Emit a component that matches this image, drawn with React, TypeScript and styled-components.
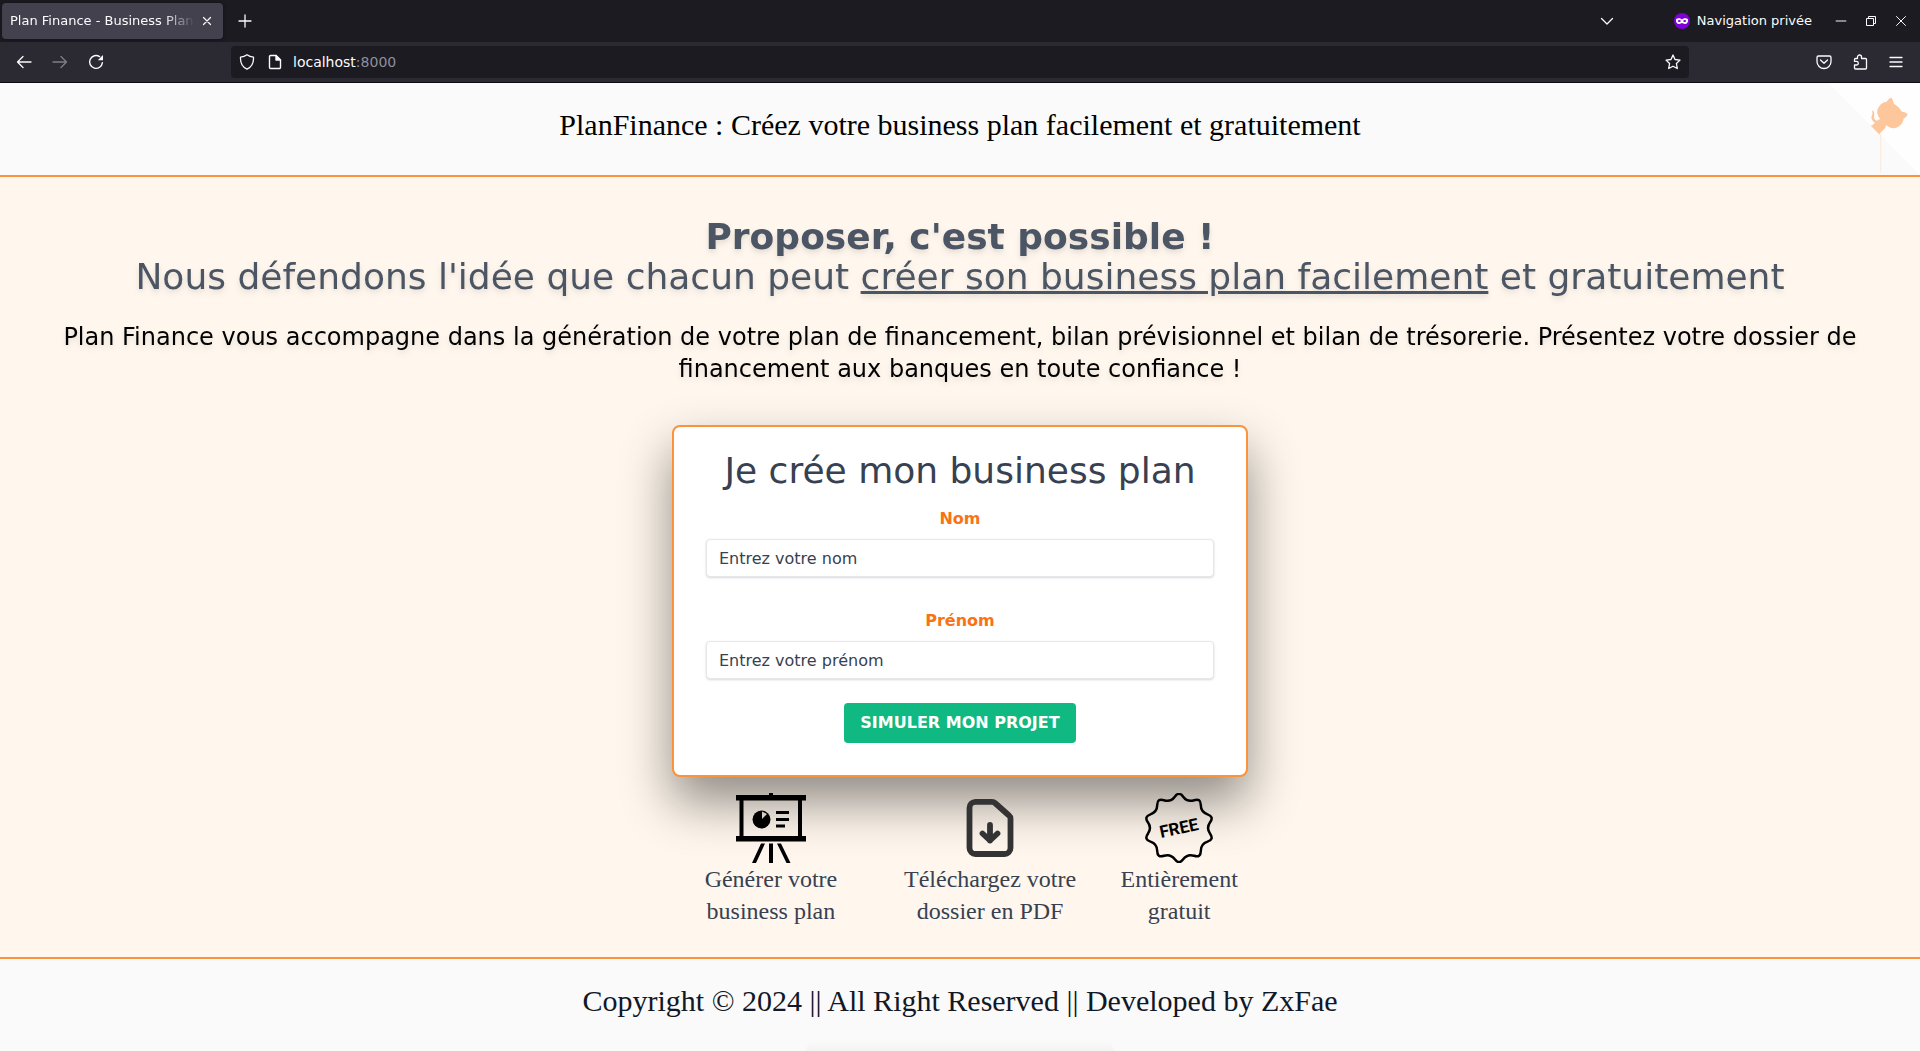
import React from "react";
import styled, { createGlobalStyle } from "styled-components";

const sans = `"DejaVu Sans", Verdana, sans-serif`;
const serif = `"Liberation Serif", "Times New Roman", serif`;

const GlobalStyle = createGlobalStyle`
  *, *::before, *::after { box-sizing: border-box; }
  body { margin: 0; background: #fafafa; font-family: ${sans}; font-size: 16px; line-height: 24px; color: #000; }
  h1, h2, p, ul { margin: 0; padding: 0; font-weight: 400; }
  button, input { font: inherit; color: inherit; }
  svg { display: block; }
`;

const Page = styled.div`
  display: flex;
  flex-direction: column;
  min-height: 100vh;
  overflow: hidden;
`;

/* ---------- Browser window ---------- */

const Chrome = styled.div`
  background: #2b2a33;
  border-bottom: 1px solid #0c0c0d;
  color: #fbfbfe;
  font-size: 13px;
  line-height: 20px;
`;

const TabBar = styled.div`
  display: flex;
  align-items: center;
  height: 42px;
  padding: 0 4px 0 2px;
  background: #1c1b22;
`;

const Tab = styled.div`
  display: flex;
  align-items: center;
  width: 221px;
  height: 36px;
  padding: 0 4px 0 8px;
  border-radius: 4px;
  background: #42414d;
  box-shadow: 0 0 4px rgba(0, 0, 0, 0.4);
`;

const TabTitle = styled.span`
  flex: 1;
  min-width: 0;
  overflow: hidden;
  white-space: nowrap;
  mask-image: linear-gradient(to left, transparent, #000 32px);
`;

const IconButton = styled.button<{ $w?: number; $dim?: boolean }>`
  display: flex;
  align-items: center;
  justify-content: center;
  flex: none;
  width: ${(p) => p.$w ?? 36}px;
  height: 32px;
  padding: 0;
  border: 0;
  background: none;
  color: #fbfbfe;
  opacity: ${(p) => (p.$dim ? 0.4 : 1)};
`;

const Spacer = styled.div`
  flex: 1;
`;

const PrivateLabel = styled.div`
  display: flex;
  align-items: center;
  gap: 7px;
  margin: 0 14px 0 49px;
`;

const NavBar = styled.div`
  display: flex;
  align-items: center;
  height: 40px;
  padding: 0 6px;
`;

const UrlBox = styled.div`
  display: flex;
  align-items: center;
  flex: 1;
  height: 32px;
  margin: 0 117px;
  padding: 0 2px;
  border-radius: 4px;
  background: #1c1b22;
`;

const Url = styled.span`
  flex: 1;
  padding-left: 4px;
  color: #8f8f9d;
  font-size: 14px;

  b {
    font-weight: 400;
    color: #fbfbfe;
  }
`;

/* ---------- Page ---------- */

const Header = styled.header`
  position: relative;
  padding: 24px 24px 32px;
  border-bottom: 2px solid #fb923c;
  background: #fafafa;
  text-align: center;
`;

const SiteTitle = styled.h1`
  font-family: ${serif};
  font-size: 30px;
  line-height: 36px;
`;

const GithubCorner = styled.a`
  position: absolute;
  top: 0;
  right: 0;
  color: #fdc79b;
`;

const Main = styled.main`
  display: flex;
  flex-direction: column;
  align-items: center;
  padding: 40px 40px 30px;
  background: #fff7ed;
  text-align: center;
`;

const Hero = styled.section`
  filter: drop-shadow(0 4px 3px rgba(0, 0, 0, 0.07)) drop-shadow(0 2px 2px rgba(0, 0, 0, 0.06));
`;

const Headline = styled.h2`
  color: #4b5563;
  font-size: 36px;
  line-height: 40px;

  strong {
    display: block;
  }
`;

const Lead = styled.p`
  margin-top: 24px;
  font-size: 24px;
  line-height: 32px;
`;

const Card = styled.form`
  display: flex;
  flex-direction: column;
  align-items: center;
  width: 100%;
  max-width: 576px;
  margin-top: 40px;
  padding: 24px 32px 32px;
  border: 2px solid #fb923c;
  border-radius: 8px;
  background: #fff;
  box-shadow: 0 25px 50px rgba(0, 0, 0, 0.44);
`;

const CardTitle = styled.h2`
  margin-bottom: 16px;
  color: #374151;
  font-size: 36px;
  line-height: 40px;
`;

const Field = styled.div<{ $last?: boolean }>`
  display: flex;
  flex-direction: column;
  align-items: center;
  gap: 8px;
  width: 100%;
  margin-bottom: ${(p) => (p.$last ? 24 : 32)}px;
`;

const Label = styled.label`
  color: #f97316;
  font-weight: 700;
`;

const TextInput = styled.input`
  width: 100%;
  height: 38px;
  padding: 8px 12px;
  border: 1px solid #e5e7eb;
  border-radius: 4px;
  background: #fff;
  box-shadow: 0 1px 3px rgba(0, 0, 0, 0.1), 0 1px 2px rgba(0, 0, 0, 0.06);
  color: #374151;
  line-height: 20px;

  &::placeholder {
    color: #374151;
    opacity: 1;
  }
`;

const Submit = styled.button`
  padding: 8px 16px;
  border: 0;
  border-radius: 4px;
  background: #10b981;
  color: #fff;
  font-weight: 700;
  text-transform: uppercase;
`;

const Features = styled.ul`
  position: relative;
  display: flex;
  justify-content: center;
  width: 100%;
  max-width: 576px;
  margin-top: 16px;
  list-style: none;
`;

const Feature = styled.li`
  display: flex;
  flex-direction: column;
  align-items: center;
  color: #374151;
  font-family: ${serif};
  font-size: 24px;
  line-height: 32px;
`;

const Footer = styled.footer`
  position: relative;
  flex: 1;
  padding: 24px 24px 32px;
  border-top: 2px solid #fb923c;
  background: #fafafa;
  color: #111827;
  font-family: ${serif};
  font-size: 30px;
  line-height: 36px;
  text-align: center;
`;

const FooterShade = styled.div`
  position: absolute;
  bottom: 0;
  left: 50%;
  width: 308px;
  height: 10px;
  margin-left: -154px;
  border-radius: 10px 10px 0 0;
  background: linear-gradient(#fafafa, #f4f3f2);
`;

/* ---------- Icons ---------- */

const Line = ({ d, size = 16, sw = 1.3 }: { d: string; size?: number; sw?: number }) => (
  <svg width={size} height={size} viewBox="0 0 16 16" fill="none" stroke="currentColor" strokeWidth={sw} strokeLinecap="round" strokeLinejoin="round" aria-hidden>
    <path d={d} />
  </svg>
);

const Reload = () => (
  <svg width="16" height="16" viewBox="0 0 16 16" fill="none" stroke="currentColor" strokeWidth="1.4" strokeLinecap="round" aria-hidden>
    <path d="M11.6 2.6A6.4 6.4 0 1 0 14.4 8.6" />
    <path d="M15 1v5.2H9.8z" fill="currentColor" stroke="none" />
  </svg>
);

const PageIcon = () => (
  <svg width="16" height="16" viewBox="0 0 16 16" fill="none" stroke="currentColor" strokeWidth="1.4" strokeLinejoin="round" aria-hidden>
    <path d="M3.7 1.5H9l4.5 4.5v7.3a1.2 1.2 0 0 1-1.2 1.2H3.7a1.2 1.2 0 0 1-1.2-1.2V2.7a1.2 1.2 0 0 1 1.2-1.2z" />
    <path d="M9 1.5V6h4.5z" fill="currentColor" />
  </svg>
);

const Mask = () => (
  <svg width="16" height="16" viewBox="0 0 16 16" aria-hidden>
    <circle cx="8" cy="8" r="8" fill="#8000d7" />
    <path d="M2 6.2c1.6-1.6 4.4-1 6 .3 1.6-1.3 4.4-1.9 6-.3.4 3-1 4.8-3 4.8-1.5 0-2.2-1-3-1s-1.500 1-3 1c-2 0-3.400-1.800-3-4.800z" fill="#fff" />
    <ellipse cx="5.3" cy="8" rx="1.5" ry="1" fill="#8000d7" />
    <ellipse cx="10.7" cy="8" rx="1.5" ry="1" fill="#8000d7" />
  </svg>
);

const Restore = () => (
  <svg width="12" height="12" viewBox="0 0 12 12" fill="none" stroke="currentColor" aria-hidden>
    <path d="M1.5 3.5h7v7h-7zM3.5 3.5v-2h7v7h-2" />
  </svg>
);

const Octocat = () => (
  <svg width="92" height="92" viewBox="0 0 250 250" aria-hidden>
    <path d="M0,0 L115,115 L130,115 L142,142 L250,250 L250,0 Z" fill="#fefefe" />
    <path d="M143 138V243" stroke="currentColor" strokeWidth="3" opacity="0.3" />
    <path d="M128.3,109.0 C113.8,99.7 119.0,89.6 119.0,89.6 C122.0,82.7 120.5,78.6 120.5,78.6 C119.2,72.0 123.4,76.3 123.4,76.3 C127.3,80.9 125.5,87.3 125.5,87.3 C122.9,97.6 130.6,101.9 134.4,103.2" fill="currentColor" />
    <path d="M115.0,115.0 C114.9,115.1 118.7,116.5 119.8,115.4 L133.7,101.6 C136.9,99.2 139.9,98.4 142.2,98.6 C133.8,88.0 127.5,74.4 143.8,58.0 C148.5,53.4 154.0,51.2 159.7,51.0 C160.3,49.4 163.2,43.6 171.4,40.1 C171.4,40.1 176.1,42.5 178.8,56.2 C183.1,58.6 187.2,61.8 190.9,65.4 C194.5,69.0 197.7,73.2 200.1,77.6 C213.8,80.2 216.3,84.9 216.3,84.9 C212.7,93.1 206.9,96.0 205.4,96.6 C205.1,102.4 203.0,107.8 198.3,112.5 C181.9,128.9 168.3,122.5 157.7,114.1 C157.9,116.9 156.7,120.9 152.7,124.9 L141.0,136.5 C139.8,137.7 141.6,141.9 141.8,141.8 Z" fill="currentColor" />
  </svg>
);

const Presentation = () => (
  <svg width="70" height="70" viewBox="0 0 70 70" aria-hidden>
    <path d="M33 0h4v2h33v5.500h-4V43h4v5.500H0V43h3.500V7.500H0V2h33zM7.500 7.500V43h54.500V7.500z" fillRule="evenodd" />
    <circle cx="25.500" cy="26.500" r="9" />
    <path d="M26 26V18.500l5 2.500z" fill="#d5ccc3" />
    <path d="M40 18h13v3H40zM40 25h13v3H40zM40 31.500h9v3h-9z" />
    <path d="M33 50.500h4V70h-4zM25 50.500h4L20 70h-4zM41 50.500h4L54.500 70h-4z" />
  </svg>
);

const Download = () => (
  <svg width="70" height="70" viewBox="0 0 70 70" fill="none" stroke="#333" strokeWidth="5.8" strokeLinecap="round" strokeLinejoin="round" aria-hidden>
    <path d="M20.5 8.8H37a4 4 0 0 1 3 1.2L54 22.5a4 4 0 0 1 1.5 3V55a6 6 0 0 1-6 6h-29a6 6 0 0 1-6-6V14.8a6 6 0 0 1 6-6z" />
    <path d="M35 32v15.500M27.500 40.500l7.500 7 7.500-7" />
  </svg>
);

/* Ten-pointed seal outline; each tip and valley is the control point of a curve. */
const sealPath = (() => {
  const n = 10;
  const pt = (i: number) => {
    const r = i % 2 === 0 ? 37 : 27;
    const a = (Math.PI * i) / n - Math.PI / 2;
    return [35 + r * Math.cos(a), 35 + r * Math.sin(a)];
  };
  const mid = (i: number) => {
    const [x, y] = pt(i);
    const [nx, ny] = pt(i + 1);
    return `${(x + nx) / 2} ${(y + ny) / 2}`;
  };
  let d = `M${mid(0)}`;
  for (let i = 1; i <= 2 * n; i++) {
    const [x, y] = pt(i);
    d += `Q${x} ${y} ${mid(i)}`;
  }
  return `${d}Z`;
})();

const FreeSeal = () => (
  <svg width="70" height="70" viewBox="0 0 70 70" aria-hidden>
    <path d={sealPath} fill="none" stroke="#000" strokeWidth="2.5" strokeLinejoin="round" />
    <text x="35" y="41" textAnchor="middle" fontFamily="Roboto, Arial, sans-serif" fontSize="17" fontWeight="700" transform="rotate(-12 35 35)">FREE</text>
  </svg>
);

export default function App() {
  return (
    <Page>
      <GlobalStyle />
      <Chrome>
        <TabBar>
          <Tab>
            <TabTitle>Plan Finance - Business Plan</TabTitle>
            <IconButton $w={24} aria-label="Fermer l'onglet"><Line sw={1.2} d="M4.500 4.500l7 7M11.500 4.500l-7 7" /></IconButton>
          </Tab>
          <IconButton $w={44} aria-label="Nouvel onglet"><Line d="M8 2v12M2 8h12" /></IconButton>
          <Spacer />
          <IconButton aria-label="Onglets"><Line d="M2.500 5.500L8 11l5.500-5.500" /></IconButton>
          <PrivateLabel><Mask />Navigation privée</PrivateLabel>
          <IconButton $w={30} aria-label="Réduire"><Line size={12} d="M1.500 8h13" /></IconButton>
          <IconButton $w={30} aria-label="Restaurer"><Restore /></IconButton>
          <IconButton $w={30} aria-label="Fermer"><Line size={12} d="M2 2l12 12M14 2L2 14" /></IconButton>
        </TabBar>
        <NavBar>
          <IconButton aria-label="Précédent"><Line d="M15 8H1.500M7 2.500L1.500 8 7 13.500" /></IconButton>
          <IconButton $dim aria-label="Suivant"><Line d="M1 8h13.500M9 2.500L14.500 8 9 13.500" /></IconButton>
          <IconButton aria-label="Actualiser"><Reload /></IconButton>
          <UrlBox>
            <IconButton $w={28} aria-label="Protection"><Line d="M8 .8c2 1.500 4.300 2.200 6.500 2.400.3 5.400-1.600 9.800-6.500 12-4.900-2.200-6.800-6.600-6.500-12C3.700 3 6 2.300 8 .8z" /></IconButton>
            <IconButton $w={28} aria-label="Informations"><PageIcon /></IconButton>
            <Url><b>localhost</b>:8000</Url>
            <IconButton $w={28} aria-label="Marque-page"><Line d="M8 1l2 4.500 5 .6-3.600 3.400.9 5L8 12.200 3.700 14.500l.9-5L1 6.100l5-.6z" /></IconButton>
          </UrlBox>
          <IconButton aria-label="Pocket"><Line d="M2.500 2h11A1.500 1.500 0 0 1 15 3.500V7.500a7 7 0 0 1-14 0v-4A1.500 1.500 0 0 1 2.500 2zM4.500 6L8 9.300 11.500 6" /></IconButton>
          <IconButton aria-label="Extensions"><Line d="M5.500 4.500V3a2 2 0 0 1 4 0v1.500h4a1 1 0 0 1 1 1v8.500a1 1 0 0 1-1 1h-10a1 1 0 0 1-1-1v-3h2a1.800 1.800 0 0 0 0-3.600h-2V5.500a1 1 0 0 1 1-1z" /></IconButton>
          <IconButton aria-label="Menu"><Line d="M2 3.500h12M2 8h12M2 12.500h12" /></IconButton>
        </NavBar>
      </Chrome>

      <Header>
        <SiteTitle>PlanFinance : Créez votre business plan facilement et gratuitement</SiteTitle>
        <GithubCorner href="#" aria-label="GitHub"><Octocat /></GithubCorner>
      </Header>

      <Main>
        <Hero>
          <Headline>
            <strong>Proposer, c'est possible !</strong>
            Nous défendons l'idée que chacun peut <u>créer son business plan facilement</u> et gratuitement
          </Headline>
          <Lead>
            Plan Finance vous accompagne dans la génération de votre plan de financement, bilan prévisionnel et bilan de trésorerie. Présentez votre dossier de financement aux banques en toute confiance !
          </Lead>
        </Hero>

        <Card onSubmit={(e) => e.preventDefault()}>
          <CardTitle>Je crée mon business plan</CardTitle>
          <Field>
            <Label htmlFor="nom">Nom</Label>
            <TextInput id="nom" type="text" placeholder="Entrez votre nom" />
          </Field>
          <Field $last>
            <Label htmlFor="prenom">Prénom</Label>
            <TextInput id="prenom" type="text" placeholder="Entrez votre prénom" />
          </Field>
          <Submit type="submit">Simuler mon projet</Submit>
        </Card>

        <Features>
          <Feature><Presentation />Générer votre business plan</Feature>
          <Feature><Download />Téléchargez votre dossier en PDF</Feature>
          <Feature><FreeSeal />Entièrement gratuit</Feature>
        </Features>
      </Main>

      <Footer>
        <p>Copyright © 2024 || All Right Reserved || Developed by ZxFae</p>
        <FooterShade />
      </Footer>
    </Page>
  );
}
